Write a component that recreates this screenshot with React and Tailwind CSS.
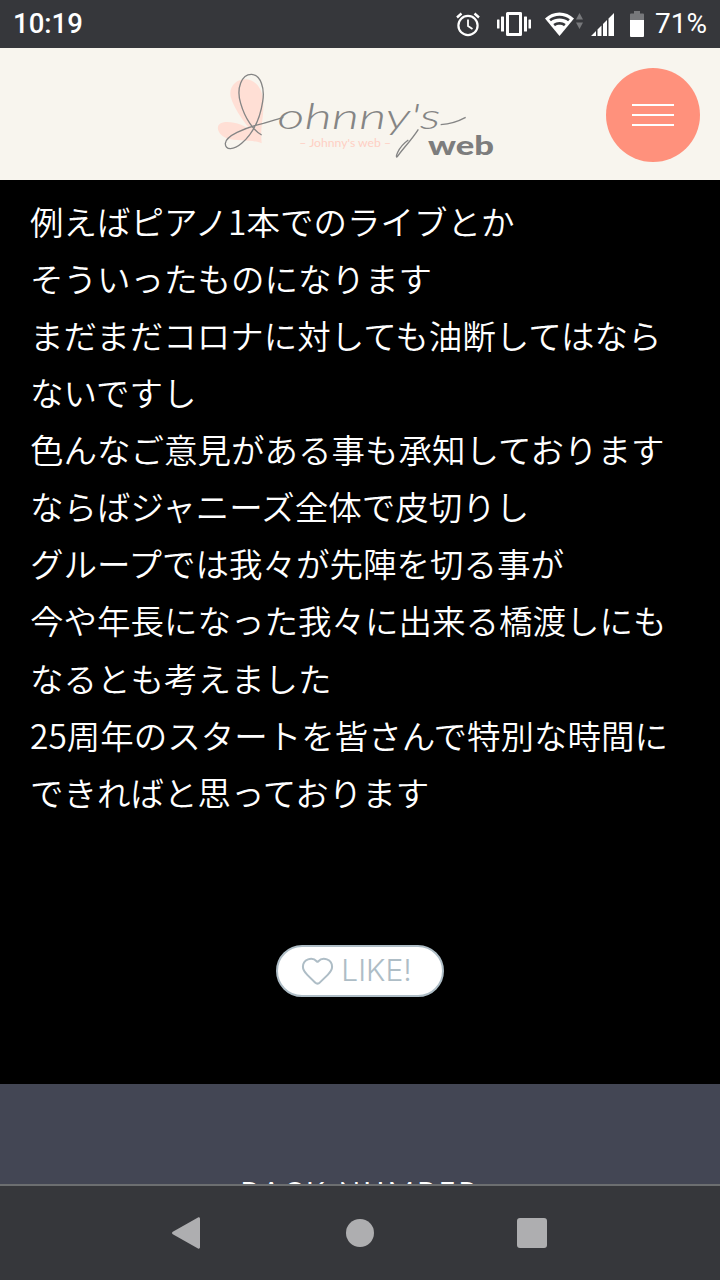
import React from "react";
import { Heart } from "lucide-react";

const lines = [
  "例えばピアノ1本でのライブとか",
  "そういったものになります",
  "まだまだコロナに対しても油断してはならないですし",
  "色んなご意見がある事も承知しております",
  "ならばジャニーズ全体で皮切りし",
  "グループでは我々が先陣を切る事が",
  "今や年長になった我々に出来る橋渡しにもなるとも考えました",
  "25周年のスタートを皆さんで特別な時間にできればと思っております",
];

const StatusIcons = () => (
  <div className="flex items-center">
    {/* alarm */}
    <svg width="26" height="26" viewBox="0 0 26 26" fill="none" stroke="white" strokeWidth="2.2" className="mr-[16px]">
      <circle cx="13" cy="14.5" r="9.6" />
      <path d="M13 8.5v6.5l4.5 3" strokeWidth="1.8" />
      <path d="M2 6.5 6.5 2.5M24 6.5 19.5 2.5" strokeWidth="2.4" />
    </svg>
    {/* vibrate */}
    <svg width="34" height="24" viewBox="0 0 34 24" fill="white" className="mr-[14px]">
      <path fillRule="evenodd" d="M10.5 0h13A1.5 1.5 0 0 1 25 1.5v21a1.5 1.5 0 0 1-1.5 1.5h-13A1.5 1.5 0 0 1 9 22.500v-21A1.500 1.500 0 0 1 10.500 0Zm1.500 3v18h10V3Z" />
      <rect x="4" y="4.500" width="3" height="15" rx="0.500" />
      <rect x="0" y="7.500" width="2.500" height="9" rx="0.500" />
      <rect x="27" y="4.500" width="3" height="15" rx="0.500" />
      <rect x="31.500" y="7.500" width="2.500" height="9" rx="0.500" />
    </svg>
    {/* wifi with up/down arrows */}
    <svg width="38" height="24" viewBox="0 0 38 24" className="mr-[8px]">
      <path d="M14.500 24 0 6.500C4 2.800 9 .5 14.500.5S25 2.800 29 6.500Z" fill="white" />
      <path d="M4.200 7.200C7 5 10.500 3.700 14.500 3.700s7.500 1.300 10.300 3.500l-1.700 2.100C20.800 7.500 17.800 6.500 14.500 6.500S8.200 7.500 5.900 9.300ZM8.300 12.100c1.700-1.300 3.900-2 6.200-2s4.500.7 6.200 2L19 14.200c-1.200-.9-2.800-1.400-4.500-1.400s-3.300.5-4.500 1.400Z" fill="#36373b" />
      <path d="M34.500 1 38 7.500h-7ZM34.500 17 38 10.500h-7Z" fill="#77787b" />
    </svg>
    {/* signal */}
    <svg width="23" height="23" viewBox="0 0 23 23" fill="white" className="mr-[16px]">
      <path d="M0 23 5 18V23ZM6.500 23V16.500L10.500 12.500V23ZM12 23V11L16 7V23ZM17.500 23V5.500L23 0V23Z" />
    </svg>
    {/* battery */}
    <svg width="14" height="26" viewBox="0 0 14 26" className="mr-[11px]">
      <path d="M4 0h6v2.500h3a1 1 0 0 1 1 1V9H0V3.500a1 1 0 0 1 1-1h3Z" fill="#77787b" />
      <path d="M0 9h14v16a1 1 0 0 1-1 1H1a1 1 0 0 1-1-1Z" fill="white" />
    </svg>
    <span>71%</span>
  </div>
);

// coordinates follow a 3x crop of the logo
const Logo = () => (
  <svg width="310" height="110" viewBox="0 0 930 330" className="ml-[200px] mt-[12px] shrink-0">
    <path d="M185 250C165 225 105 160 92 110 85 75 115 55 140 58 170 62 190 90 190 130 192 170 180 200 185 250Z" fill="#ffdfd5" />
    <path d="M170 222C130 190 85 180 62 190 45 200 55 225 80 235 110 245 160 238 185 250Z" fill="#ffdfd5" />
    <path
      d="M185 225C160 212 135 175 122 130 108 85 125 42 155 43 182 45 195 85 188 125 182 165 165 215 125 250 100 272 75 270 76 250 78 228 130 205 190 190 215 183 235 176 250 172"
      fill="none"
      stroke="#858585"
      strokeWidth="4"
    />
    <text x="232" y="208" textLength="490" lengthAdjust="spacingAndGlyphs" fontSize="104" fontStyle="italic" fontWeight="300" fill="#858585" className="font-['Lato',sans-serif]">
      ohnny's
    </text>
    <path d="M722 194C750 192 775 184 797 172M655 208C635 240 605 270 592 290 585 298 590 265 625 240" fill="none" stroke="#858585" strokeWidth="4" />
    <text x="298" y="262" textLength="275" lengthAdjust="spacingAndGlyphs" fontSize="34" fill="#ffd0c4" className="font-['Lato',sans-serif]">
      – Johnny's web –
    </text>
    <text x="684" y="284" textLength="198" lengthAdjust="spacingAndGlyphs" fontSize="78" fontWeight="900" fill="#7d7d7d" className="font-['Lato',sans-serif]">
      web
    </text>
  </svg>
);

export default function App() {
  return (
    <div className="flex h-[1280px] w-[720px] flex-col overflow-hidden bg-black font-['Noto_Sans_CJK_JP',sans-serif]">
      <div className="flex h-[48px] shrink-0 items-center justify-between bg-[#36373b] px-[13px] font-['Roboto',sans-serif] text-[28px] text-white">
        <span className="text-[27.5px] font-medium">10:19</span>
        <StatusIcons />
      </div>

      <header className="flex h-[132px] shrink-0 items-start bg-[#f8f5ee]">
        <Logo />
        <button className="ml-[96px] mt-[20px] flex h-[94px] w-[94px] shrink-0 flex-col items-center justify-center gap-[8px] rounded-full bg-[#ff917c]">
          <span className="h-[2px] w-[42px] bg-white" />
          <span className="h-[2px] w-[42px] bg-white" />
          <span className="h-[2px] w-[42px] bg-white" />
        </button>
      </header>

      <main className="min-h-0 flex-1 overflow-hidden">
        <div className="px-[30px] pt-[11.5px] text-[33.5px] font-[350] leading-[57.12px] text-white">
          {lines.map((line) => (
            <p key={line}>{line}</p>
          ))}
        </div>

        <div className="mt-[125px] flex justify-center pb-[87px]">
          <button className="flex h-[52px] w-[168px] items-center justify-center gap-[6px] rounded-full border-2 border-[#aebdc6] bg-white pr-[8px] font-['Inter',sans-serif] text-[30px] font-light text-[#aebdc6]">
            <Heart size={35} strokeWidth={1.4} />
            LIKE!
          </button>
        </div>

        <section className="h-[200px] bg-[#434654] pt-[87px] text-center font-['Lato',sans-serif] text-[28px] tracking-[3.5px] text-white">
          BACK NUMBER
        </section>
      </main>

      <nav className="flex h-[96px] shrink-0 items-center border-t-2 border-[#6c6e70] bg-[#36373b] pl-[172px]">
        <svg width="28" height="32" viewBox="0 0 28 32" fill="#aeaeb0">
          <path d="M26 .6C27 0 28 .6 28 1.800V30.200C28 31.400 27 32 26 31.400L.8 17.200C-.2 16.600-.2 15.400.8 14.800Z" />
        </svg>
        <span className="ml-[146px] h-[28px] w-[28px] rounded-full bg-[#aeaeb0]" />
        <span className="ml-[143px] h-[30px] w-[30px] rounded-[3px] bg-[#aeaeb0]" />
      </nav>
    </div>
  );
}
